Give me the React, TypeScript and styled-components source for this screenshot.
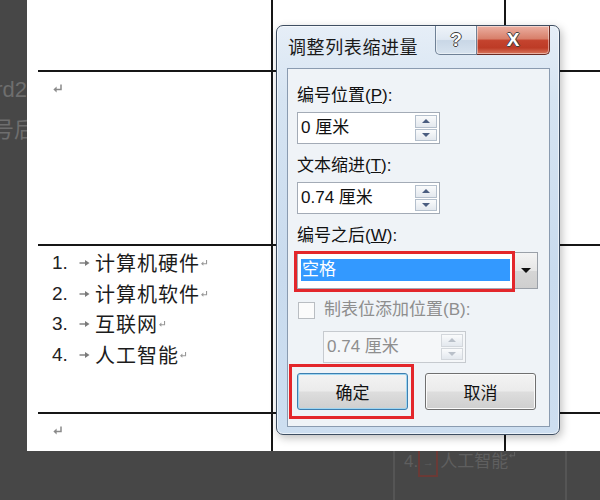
import styled, { createGlobalStyle } from "styled-components";

const GlobalStyle = createGlobalStyle`
  html, body {
    margin: 0;
    padding: 0;
    background: #474747;
  }
  body {
    font-family: "Liberation Sans", "Noto Sans CJK SC", sans-serif;
  }
  * {
    box-sizing: border-box;
  }
`;

const Stage = styled.div`
  position: relative;
  width: 600px;
  height: 500px;
  overflow: hidden;
  display: grid;
  grid-template-columns: 27px 1fr;
  grid-template-rows: 451px 49px;
  background: #474747;
`;

/* text of the window behind, cut off by the page */
const Gutter = styled.div`
  overflow: hidden;
  display: flex;
  flex-direction: column;
  gap: 14px;
  padding-top: 77px;
  color: #6e6e6e;
  font-size: 22px;
  line-height: 26px;
`;

const GutterLine = styled.div<{ $bleed?: number }>`
  display: flex;
  justify-content: flex-end;
  white-space: nowrap;
  margin-right: ${(p) => -(p.$bleed ?? 0)}px;
`;

const Sheet = styled.div`
  background: #fff;
  overflow: hidden;
  padding-left: 11px;
`;

const Table = styled.div`
  display: grid;
  grid-template-columns: 233px 233px 1fr;
  grid-template-rows: 70px 174px 168px 39px;
  height: 100%;
`;

const Cell = styled.div<{ $row: number; $col: number; $pad?: string }>`
  border-top: ${(p) => (p.$row > 0 ? "2px solid #161616" : "none")};
  border-left: ${(p) => (p.$col > 0 ? "2px solid #161616" : "none")};
  padding: ${(p) => p.$pad ?? "0"};
`;

const Mark = styled.svg<{ $size: number }>`
  display: inline-block;
  width: ${(p) => p.$size}px;
  height: ${(p) => p.$size}px;
  vertical-align: ${(p) => (p.$size > 9 ? "top" : "middle")};
`;

const ReturnMark = ({ size = 11, color = "#8a8a8a" }: { size?: number; color?: string }) => (
  <Mark $size={size} viewBox="0 0 11 11">
    <path d="M9 1.5V6.5H3" fill="none" stroke={color} strokeWidth="1.5" />
    <path d="M4.6 3.6L1.4 6.5L4.6 9.4Z" fill={color} />
  </Mark>
);

const TabMark = styled.svg`
  width: 11px;
  height: 8px;
  margin: 0 5px 0 1px;
  flex-shrink: 0;
`;

const TabArrow = ({ color = "#7a7a7a" }: { color?: string }) => (
  <TabMark viewBox="0 0 11 8">
    <path d="M0.5 4H8" stroke={color} strokeWidth="1.4" />
    <path d="M6 1L10.5 4L6 7Z" fill={color} />
  </TabMark>
);

const List = styled.ol`
  list-style: none;
  margin: 0;
  padding: 0;
`;

const ListItem = styled.li`
  display: flex;
  align-items: center;
  height: 30.5px;
  color: #1c1c1c;
`;

const Num = styled.span`
  width: 26px;
  font-size: 19px;
  font-family: "Liberation Sans", sans-serif;
  color: #222;
`;

const ItemText = styled.span`
  font-family: "Noto Sans CJK SC", sans-serif;
  font-size: 20px;
  letter-spacing: 1px;
  line-height: 30px;
`;

/* Aero dialog */
const Dialog = styled.div`
  position: absolute;
  left: 276px;
  top: 25px;
  width: 284px;
  height: 410px;
  border: 1px solid #3e4e62;
  border-radius: 7px;
  background: linear-gradient(180deg, #e6eef7 0%, #d6e4f2 18%, #c9dbee 60%, #cddef0 100%);
  box-shadow: inset 0 0 0 1px rgba(255, 255, 255, 0.6), 2px 3px 8px rgba(0, 0, 0, 0.25);
  padding: 0 9px 7px 10px;
  display: flex;
  flex-direction: column;
  font-family: "Liberation Sans", "Noto Sans CJK SC", sans-serif;
`;

const TitleBar = styled.div`
  height: 42px;
  display: flex;
  justify-content: space-between;
  flex-shrink: 0;
`;

const Title = styled.div`
  padding: 9px 0 0 1px;
  font-size: 18px;
  letter-spacing: 0.6px;
  line-height: 26px;
  color: #1a1a1a;
`;

const CaptionButtons = styled.div`
  display: flex;
  height: 29px;
`;

const CaptionButton = styled.div<{ $kind: "help" | "close" }>`
  width: ${(p) => (p.$kind === "help" ? 42 : 73)}px;
  display: flex;
  align-items: center;
  justify-content: center;
  border: 1px solid ${(p) => (p.$kind === "help" ? "#6f8196" : "#6b2a22")};
  border-top: none;
  border-left: ${(p) => (p.$kind === "help" ? "1px solid #6f8196" : "none")};
  border-radius: ${(p) => (p.$kind === "help" ? "0 0 0 5px" : "0 0 5px 0")};
  background: ${(p) =>
    p.$kind === "help"
      ? "linear-gradient(180deg, #eef3f9 0%, #dfe8f2 48%, #c9d7e6 52%, #d7e3ef 100%)"
      : "linear-gradient(180deg, #ebb0a2 0%, #d8806b 45%, #c4432e 52%, #bd3b26 78%, #d9775d 100%)"};
  box-shadow: inset 0 0 0 1px rgba(255, 255, 255, 0.45);
  color: #fff;
  font-weight: bold;
  font-size: ${(p) => (p.$kind === "help" ? 19 : 19)}px;
  text-shadow: -1px 0 #3f3f3f, 1px 0 #3f3f3f, 0 -1px #3f3f3f, 0 1px #3f3f3f;
`;

const Panel = styled.div`
  flex: 1;
  border: 1px solid #8a9bb0;
  background: #eff3f7;
  padding: 17px 10px 0 9px;
  display: flex;
  flex-direction: column;
  gap: 12px;
`;

const Field = styled.div`
  display: flex;
  flex-direction: column;
  gap: 6px;
`;

const Label = styled.div<{ $disabled?: boolean }>`
  font-size: 17px;
  line-height: 20px;
  color: ${(p) => (p.$disabled ? "#8e8e8e" : "#111")};
  white-space: nowrap;
`;

const SpinBox = styled.div<{ $disabled?: boolean; $indent?: number }>`
  display: flex;
  width: 143px;
  height: 32px;
  margin-left: ${(p) => p.$indent ?? 0}px;
  border: 1px solid ${(p) => (p.$disabled ? "#c6cacf" : "#a3abb6")};
  background: ${(p) => (p.$disabled ? "#f5f7f9" : "#fff")};
`;

const SpinText = styled.div<{ $disabled?: boolean }>`
  flex: 1;
  padding-left: 3px;
  font-size: 17px;
  line-height: 30px;
  color: ${(p) => (p.$disabled ? "#8e8e8e" : "#111")};
`;

const SpinButtons = styled.div`
  width: 24px;
  display: flex;
  flex-direction: column;
  gap: 1px;
  padding: 2px 2px 2px 0;
`;

const SpinStep = styled.div<{ $down?: boolean; $disabled?: boolean }>`
  flex: 1;
  display: flex;
  align-items: center;
  justify-content: center;
  border: 1px solid ${(p) => (p.$disabled ? "#d3d7dc" : "#b4bfcc")};
  background: linear-gradient(180deg, #fafbfc, #e3e8ee);

  &::before {
    content: "";
    border-left: 4px solid transparent;
    border-right: 4px solid transparent;
    ${(p) => (p.$down ? "border-top" : "border-bottom")}: 4px solid
      ${(p) => (p.$disabled ? "#b9c0c9" : "#4a5d80")};
  }
`;

/* red annotation frame drawn over a control */
const markFrame = (inset: string) => `
  position: relative;
  &::after {
    content: "";
    position: absolute;
    inset: ${inset};
    border: 3px solid #e3262b;
    pointer-events: none;
  }
`;

const SelectRow = styled.div`
  display: flex;
  width: 241px;
  height: 37px;
`;

const SelectText = styled.div`
  flex: 1;
  border: 1px solid #a3abb6;
  background: #fff;
  padding: 6px 4px 7px 3px;
  ${markFrame("-2px -1px -4px -4px")}
`;

const Highlight = styled.div`
  height: 100%;
  background: #3399ff;
  color: #fff;
  font-size: 17px;
  line-height: 22px;
  padding-left: 1px;
`;

const DropButton = styled.div`
  width: 23px;
  display: flex;
  align-items: center;
  justify-content: center;
  border: 1px solid #9aa0a8;
  border-left: none;
  background: linear-gradient(180deg, #f4f4f4 0%, #e6e6e6 50%, #d6d6d6 51%, #cfcfcf 100%);

  &::before {
    content: "";
    border-left: 5px solid transparent;
    border-right: 5px solid transparent;
    border-top: 5px solid #111;
  }
`;

const CheckRow = styled.div`
  display: flex;
  align-items: center;
  gap: 9px;
  height: 18px;
  padding-left: 1px;
`;

const CheckBox = styled.div`
  width: 17px;
  height: 17px;
  border: 1px solid #b9bdc2;
  background: #fbfbfb;
`;

const ButtonRow = styled.div`
  display: flex;
  gap: 17px;
  margin-top: -2px;
`;

const Button = styled.div<{ $default?: boolean; $marked?: boolean }>`
  width: 111px;
  height: 37px;
  display: flex;
  align-items: center;
  justify-content: center;
  border: 1px solid ${(p) => (p.$default ? "#3c7fb1" : "#707070")};
  border-radius: 3px;
  background: linear-gradient(180deg, #f3f3f3 0%, #ebebeb 48%, #dddddd 52%, #cfcfcf 100%);
  box-shadow: inset 0 0 0 1px ${(p) => (p.$default ? "#9fd5f0" : "#fbfbfb")};
  font-size: 17px;
  color: #111;
  ${(p) => (p.$marked ? markFrame("-10px -7px -10px -9px") : "")}
`;

/* faded window underneath, below the page */
const Underlay = styled.div`
  grid-column: 1 / -1;
  padding-left: 393px;
  display: flex;
`;

const GhostCell = styled.div`
  width: 174px;
  border-left: 2px solid #555;
  border-right: 2px solid #555;
  padding-left: 9px;
  display: flex;
  align-items: flex-start;
  color: #5f5f5f;
  font-size: 17px;
  line-height: 22px;
`;

const GhostTab = styled.span`
  width: 20px;
  height: 26px;
  border: 2px solid #6a3a36;
  border-top: none;
  text-align: center;
  font-size: 11px;
  margin: 0 2px 0 0;
`;

const items = ["计算机硬件", "计算机软件", "互联网", "人工智能"];

const App = () => {
  return (
    <>
      <GlobalStyle />
      <Stage>
        <Gutter>
          <GutterLine>Word2</GutterLine>
          <GutterLine $bleed={9}>编号后</GutterLine>
        </Gutter>
        <Sheet>
          <Table>
            <Cell $row={0} $col={0} />
            <Cell $row={0} $col={1} />
            <Cell $row={0} $col={2} />
            <Cell $row={1} $col={0} $pad="11px 0 0 14px">
              <ReturnMark />
            </Cell>
            <Cell $row={1} $col={1} />
            <Cell $row={1} $col={2} />
            <Cell $row={2} $col={0} $pad="2px 0 0 14px">
              <List>
                {items.map((text, i) => (
                  <ListItem key={text}>
                    <Num>{i + 1}.</Num>
                    <TabArrow />
                    <ItemText>{text}</ItemText>
                    <ReturnMark size={8} color="#999" />
                  </ListItem>
                ))}
              </List>
            </Cell>
            <Cell $row={2} $col={1} />
            <Cell $row={2} $col={2} />
            <Cell $row={3} $col={0} $pad="11px 0 0 14px">
              <ReturnMark />
            </Cell>
            <Cell $row={3} $col={1} />
            <Cell $row={3} $col={2} />
          </Table>
        </Sheet>
        <Underlay>
          <GhostCell>
            <span>4.</span>
            <GhostTab>→</GhostTab>
            <span>人工智能</span>
            <ReturnMark size={8} color="#5f5f5f" />
          </GhostCell>
        </Underlay>

        <Dialog>
          <TitleBar>
            <Title>调整列表缩进量</Title>
            <CaptionButtons>
              <CaptionButton $kind="help">?</CaptionButton>
              <CaptionButton $kind="close">X</CaptionButton>
            </CaptionButtons>
          </TitleBar>
          <Panel>
            <Field>
              <Label>
                编号位置(<u>P</u>):
              </Label>
              <SpinBox>
                <SpinText>0 厘米</SpinText>
                <SpinButtons>
                  <SpinStep />
                  <SpinStep $down />
                </SpinButtons>
              </SpinBox>
            </Field>
            <Field>
              <Label>
                文本缩进(<u>T</u>):
              </Label>
              <SpinBox>
                <SpinText>0.74 厘米</SpinText>
                <SpinButtons>
                  <SpinStep />
                  <SpinStep $down />
                </SpinButtons>
              </SpinBox>
            </Field>
            <Field>
              <Label>
                编号之后(<u>W</u>):
              </Label>
              <SelectRow>
                <SelectText>
                  <Highlight>空格</Highlight>
                </SelectText>
                <DropButton />
              </SelectRow>
            </Field>
            <CheckRow>
              <CheckBox />
              <Label $disabled>制表位添加位置(B):</Label>
            </CheckRow>
            <SpinBox $disabled $indent={26}>
              <SpinText $disabled>0.74 厘米</SpinText>
              <SpinButtons>
                <SpinStep $disabled />
                <SpinStep $down $disabled />
              </SpinButtons>
            </SpinBox>
            <ButtonRow>
              <Button $default $marked>
                确定
              </Button>
              <Button>取消</Button>
            </ButtonRow>
          </Panel>
        </Dialog>
      </Stage>
    </>
  );
};

export default App;
